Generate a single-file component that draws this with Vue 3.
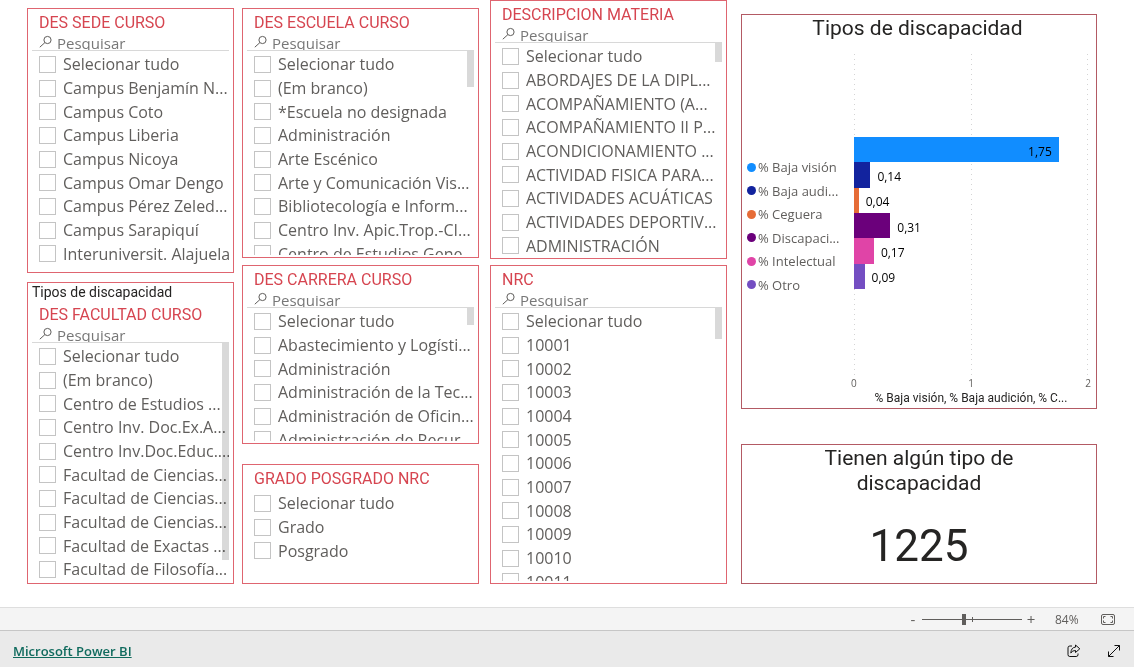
<script setup>
import { ref } from 'vue'

const columns = [
  {
    key: 'one',
    panels: [
      {
        id: 'sede', title: 'DES SEDE CURSO', search: true,
        items: ['Selecionar tudo', 'Campus Benjamín N...', 'Campus Coto', 'Campus Liberia', 'Campus Nicoya', 'Campus Omar Dengo', 'Campus Pérez Zeled...', 'Campus Sarapiquí', 'Interuniversit. Alajuela'],
      },
      {
        id: 'facultad', title: 'DES FACULTAD CURSO', search: true, caption: 'Tipos de discapacidad',
        items: ['Selecionar tudo', '(Em branco)', 'Centro de Estudios ...', 'Centro Inv. Doc.Ex.A...', 'Centro Inv.Doc.Educ....', 'Facultad de Ciencias...', 'Facultad de Ciencias...', 'Facultad de Ciencias...', 'Facultad de Exactas ...', 'Facultad de Filosofía...'],
      },
    ],
  },
  {
    key: 'two',
    panels: [
      {
        id: 'escuela', title: 'DES ESCUELA CURSO', search: true,
        items: ['Selecionar tudo', '(Em branco)', '*Escuela no designada', 'Administración', 'Arte Escénico', 'Arte y Comunicación Vis...', 'Bibliotecología e Inform...', 'Centro Inv. Apic.Trop.-CI...', 'Centro de Estudios Gene...'],
      },
      {
        id: 'carrera', title: 'DES CARRERA CURSO', search: true,
        items: ['Selecionar tudo', 'Abastecimiento y Logísti...', 'Administración', 'Administración de la Tec...', 'Administración de Oficin...', 'Administración de Recur...'],
      },
      { id: 'grado', title: 'GRADO POSGRADO NRC', search: false, items: ['Selecionar tudo', 'Grado', 'Posgrado'] },
    ],
  },
  {
    key: 'three',
    panels: [
      {
        id: 'materia', title: 'DESCRIPCION MATERIA', search: true,
        items: ['Selecionar tudo', 'ABORDAJES DE LA DIPL...', 'ACOMPAÑAMIENTO (A...', 'ACOMPAÑAMIENTO II P...', 'ACONDICIONAMIENTO ...', 'ACTIVIDAD FISICA PARA...', 'ACTIVIDADES ACUÁTICAS', 'ACTIVIDADES DEPORTIV...', 'ADMINISTRACIÓN'],
      },
      {
        id: 'nrc', title: 'NRC', search: true,
        items: ['Selecionar tudo', '10001', '10002', '10003', '10004', '10005', '10006', '10007', '10008', '10009', '10010', '10011'],
      },
    ],
  },
]

const series = [
  { name: '% Baja visión', value: 1.75, label: '1,75', color: '#118dff' },
  { name: '% Baja audi...', value: 0.14, label: '0,14', color: '#12239e' },
  { name: '% Ceguera', value: 0.04, label: '0,04', color: '#e66c37' },
  { name: '% Discapaci...', value: 0.31, label: '0,31', color: '#6b007b' },
  { name: '% Intelectual', value: 0.17, label: '0,17', color: '#e044a7' },
  { name: '% Otro', value: 0.09, label: '0,09', color: '#744ec2' },
]

const zoom = ref(84)
</script>

<template>
  <div class="report">
    <main class="canvas">
      <div v-for="col in columns" :key="col.key" class="column" :class="col.key">
        <section v-for="p in col.panels" :key="p.id" class="panel" :class="p.id">
          <p v-if="p.caption" class="caption">{{ p.caption }}</p>
          <h2 class="title">{{ p.title }}</h2>
          <div v-if="p.search" class="search">
            <svg class="lens" viewBox="0 0 14 14" aria-hidden="true">
              <circle cx="8.5" cy="5" r="3.6" />
              <path d="M5.9 7.6 L0.8 12.2" />
            </svg>
            <input class="query" type="text" placeholder="Pesquisar" :aria-label="'Pesquisar ' + p.title" />
          </div>
          <div class="body">
            <ul class="list">
              <li v-for="(item, i) in p.items" :key="i" class="row">
                <input :id="p.id + i" class="tick" type="checkbox" />
                <label class="name" :for="p.id + i">{{ item }}</label>
              </li>
            </ul>
            <div class="thumb"></div>
          </div>
        </section>
      </div>

      <div class="column four">
        <section class="card chart">
          <h2 class="heading">Tipos de discapacidad</h2>
          <div class="chart-body">
            <ul class="legend">
              <li v-for="s in series" :key="s.name" class="key">
                <span class="dot" :style="{ background: s.color }"></span>{{ s.name }}
              </li>
            </ul>
            <div class="plot-side">
              <div class="plot">
                <div v-for="s in series" :key="s.name" class="bar-row">
                  <div class="bar" :style="{ width: s.value * 50 + '%', background: s.color }">
                    <span v-if="s.value > 1" class="value">{{ s.label }}</span>
                  </div>
                  <span v-if="s.value <= 1" class="value">{{ s.label }}</span>
                </div>
              </div>
              <div class="axis"><span>0</span><span>1</span><span>2</span></div>
              <p class="axis-title">% Baja visión, % Baja audición, % C...</p>
            </div>
          </div>
        </section>
        <section class="card total">
          <h2 class="heading">Tienen algún tipo de<br />discapacidad</h2>
          <p class="number">1225</p>
        </section>
      </div>
    </main>

    <div class="zoom-bar">
      <button class="step" type="button" aria-label="Reduzir">-</button>
      <div class="slider">
        <input v-model="zoom" class="range" type="range" min="10" max="186" aria-label="Zoom" />
        <span class="mark"></span>
      </div>
      <button class="step" type="button" aria-label="Ampliar">+</button>
      <span class="percent">{{ zoom }}%</span>
      <button class="fit" type="button" aria-label="Ajustar à página">
        <svg viewBox="0 0 14 11" width="14" height="11">
          <rect x="0.5" y="0.5" width="13" height="10" rx="1.5" />
          <path d="M2.5 4.5V2.5H4.5M9.5 2.5H11.5V4.5M11.5 6.5V8.5H9.5M4.5 8.5H2.5V6.5" />
        </svg>
      </button>
    </div>

    <footer class="footer">
      <a class="brand" href="#">Microsoft Power BI</a>
      <button class="action" type="button" aria-label="Compartilhar">
        <svg viewBox="0 0 14 14" width="14" height="14">
          <path d="M5 2H2.8Q1 2 1 3.8V10.7Q1 12.5 2.8 12.5H9.2Q11 12.5 11 10.7V9.5" />
          <path d="M8.5 1L12.8 4.8L8.5 8.5V6.5Q5.5 6.3 3.8 9Q4.2 3.4 8.5 3.1Z" />
        </svg>
      </button>
      <button class="action" type="button" aria-label="Tela cheia">
        <svg viewBox="0 0 14 14" width="14" height="14">
          <path d="M1.5 12.5L12.5 1.5M7.5 1.5H12.5V6.5M1.5 7.5V12.5H6.5" />
        </svg>
      </button>
    </footer>
  </div>
</template>

<style>
body {
  margin: 0;
  background: #fff;
}
</style>

<style scoped>
.report {
  display: flex;
  flex-direction: column;
  min-height: 100vh;
  font-family: "Open Sans", "Noto Sans", sans-serif;
  color: #605e5c;
}
h2, p, ul {
  margin: 0;
  padding: 0;
  list-style: none;
  font-weight: 400;
}
button {
  padding: 0;
  border: 0;
  background: none;
  color: inherit;
  font: inherit;
}
svg {
  display: block;
  fill: none;
  stroke: currentColor;
}
.canvas {
  flex: 1;
  display: flex;
  align-items: flex-start;
  padding: 0 37px 20px 27px;
}
.column {
  display: flex;
  flex-direction: column;
  min-width: 0;
}
.one { flex: 207; padding-top: 8px; gap: 9px; }
.two { flex: 237; padding-top: 8px; margin-left: 8px; gap: 7px; }
.three { flex: 237; margin-left: 11px; gap: 6px; }
.four { flex: 356; padding-top: 14px; margin-left: 14px; gap: 35px; }

.panel {
  box-sizing: border-box;
  border: 1px solid #df6570;
  padding: 0 4px 2px;
}
.caption {
  height: 18px;
  font: 14px/18px Roboto, sans-serif;
  color: #252423;
}
.title {
  height: 26px;
  padding-left: 7px;
  font: 400 16px/28px Roboto, sans-serif;
  color: #d64550;
  white-space: nowrap;
}
.search {
  display: flex;
  align-items: flex-start;
  height: 15px;
  padding-left: 7px;
  border-bottom: 1px solid #d8d8d8;
  overflow: hidden;
}
.lens {
  flex: none;
  width: 14px;
  height: 14px;
}
.query {
  flex: 1;
  min-width: 0;
  height: 16px;
  margin-left: 4px;
  padding: 0;
  border: 0;
  outline: 0;
  background: none;
  font: 15px/16px "Open Sans", sans-serif;
  color: #605e5c;
}
.query::placeholder { color: #777; opacity: 1; }
.body { position: relative; }
.list {
  padding: 1px 0 0 7px;
  overflow: hidden;
}
.row {
  display: flex;
  align-items: center;
  height: 24px;
  white-space: nowrap;
}
.row:nth-child(3n) { height: 23px; }
.tick {
  appearance: none;
  flex: none;
  box-sizing: border-box;
  width: 17px;
  height: 17px;
  margin: 0 7px 0 0;
  border: 1px solid #c4c4c4;
  background: #fff;
}
.tick:checked { background: #605e5c; }
.name { font-size: 16px; line-height: 24px; }
.thumb {
  position: absolute;
  top: 0;
  right: 0;
  width: 7px;
  background: #d9d9d9;
  mix-blend-mode: multiply;
}
.sede { padding-bottom: 7px; }
.escuela .list { height: 203px; }
.escuela .thumb { height: 36px; }
.facultad .thumb { height: 217px; }
.carrera .list { height: 132px; }
.carrera .thumb { height: 17px; }
.materia .thumb { height: 19px; }
.materia { padding-bottom: 1px; }
.nrc .list { height: 272px; }
.nrc .thumb { height: 31px; }
.grado { margin-top: 13px; padding-bottom: 21px; }
.grado .title { height: 25px; }

.card {
  box-sizing: border-box;
  border: 1px solid #b35a64;
  text-align: center;
}
.heading {
  font: 21px/25px Roboto, sans-serif;
  color: #252423;
}
.chart { padding: 1px 8px 2px 5px; }
.chart-body {
  display: flex;
  padding-top: 13px;
}
.legend {
  flex: none;
  width: 107px;
  padding-top: 101px;
}
.key {
  display: flex;
  align-items: center;
  height: 24px;
  gap: 2px;
  font-size: 13px;
  white-space: nowrap;
}
.key:nth-child(even) { height: 23px; }
.dot {
  width: 9px;
  height: 9px;
  border-radius: 50%;
}
.plot-side { flex: 1; min-width: 0; }
.plot {
  display: flex;
  flex-direction: column;
  box-sizing: border-box;
  height: 321px;
  padding: 83px 0 86px;
  background:
    repeating-linear-gradient(#d4d4d4 0 1px, transparent 1px 5px) left / 1px 100% no-repeat,
    repeating-linear-gradient(#d4d4d4 0 1px, transparent 1px 5px) center / 1px 100% no-repeat,
    repeating-linear-gradient(#d4d4d4 0 1px, transparent 1px 5px) right / 1px 100% no-repeat;
}
.bar-row {
  flex: 1;
  display: flex;
  align-items: center;
}
.bar {
  display: flex;
  align-items: center;
  justify-content: flex-end;
  height: 100%;
}
.value {
  padding: 4px 7px 0;
  font-size: 12px;
  line-height: 16px;
  color: #000;
}
.axis {
  display: flex;
  justify-content: space-between;
  margin: 0 -3px;
  font-size: 10px;
  line-height: 16px;
}
.axis-title {
  font: 12px/15px Roboto, sans-serif;
  color: #252423;
  white-space: nowrap;
}
.total { padding: 1px 0 12px; }
.number {
  padding-top: 25px;
  font: 44px/50px Roboto, sans-serif;
  color: #252423;
}

.zoom-bar {
  display: flex;
  align-items: center;
  justify-content: flex-end;
  height: 22px;
  padding-right: 19px;
  border-top: 1px solid #dedede;
  border-bottom: 1px solid #c6c6c6;
  background: #f4f4f4;
  font-size: 12px;
}
.step {
  width: 18px;
  font-size: 15px;
  line-height: 20px;
}
.slider {
  position: relative;
  width: 100px;
  height: 12px;
}
.range {
  appearance: none;
  display: block;
  width: 100%;
  height: 12px;
  margin: 0;
  background: linear-gradient(#605e5c, #605e5c) center / 100% 1px no-repeat;
}
.range::-webkit-slider-thumb {
  appearance: none;
  width: 4px;
  height: 11px;
  background: #605e5c;
}
.mark {
  position: absolute;
  top: 4px;
  left: 50%;
  width: 1px;
  height: 5px;
  background: #605e5c;
}
.percent {
  width: 24px;
  margin: 0 22px 0 15px;
}
.fit { display: block; }
.footer {
  display: flex;
  align-items: center;
  gap: 26px;
  height: 36px;
  padding: 3px 13px 0;
  box-sizing: border-box;
  background: #eaeaea;
}
.brand {
  margin-right: auto;
  font-size: 13px;
  font-weight: 600;
  color: #0f6a5d;
}
.action { color: #111; }
</style>
